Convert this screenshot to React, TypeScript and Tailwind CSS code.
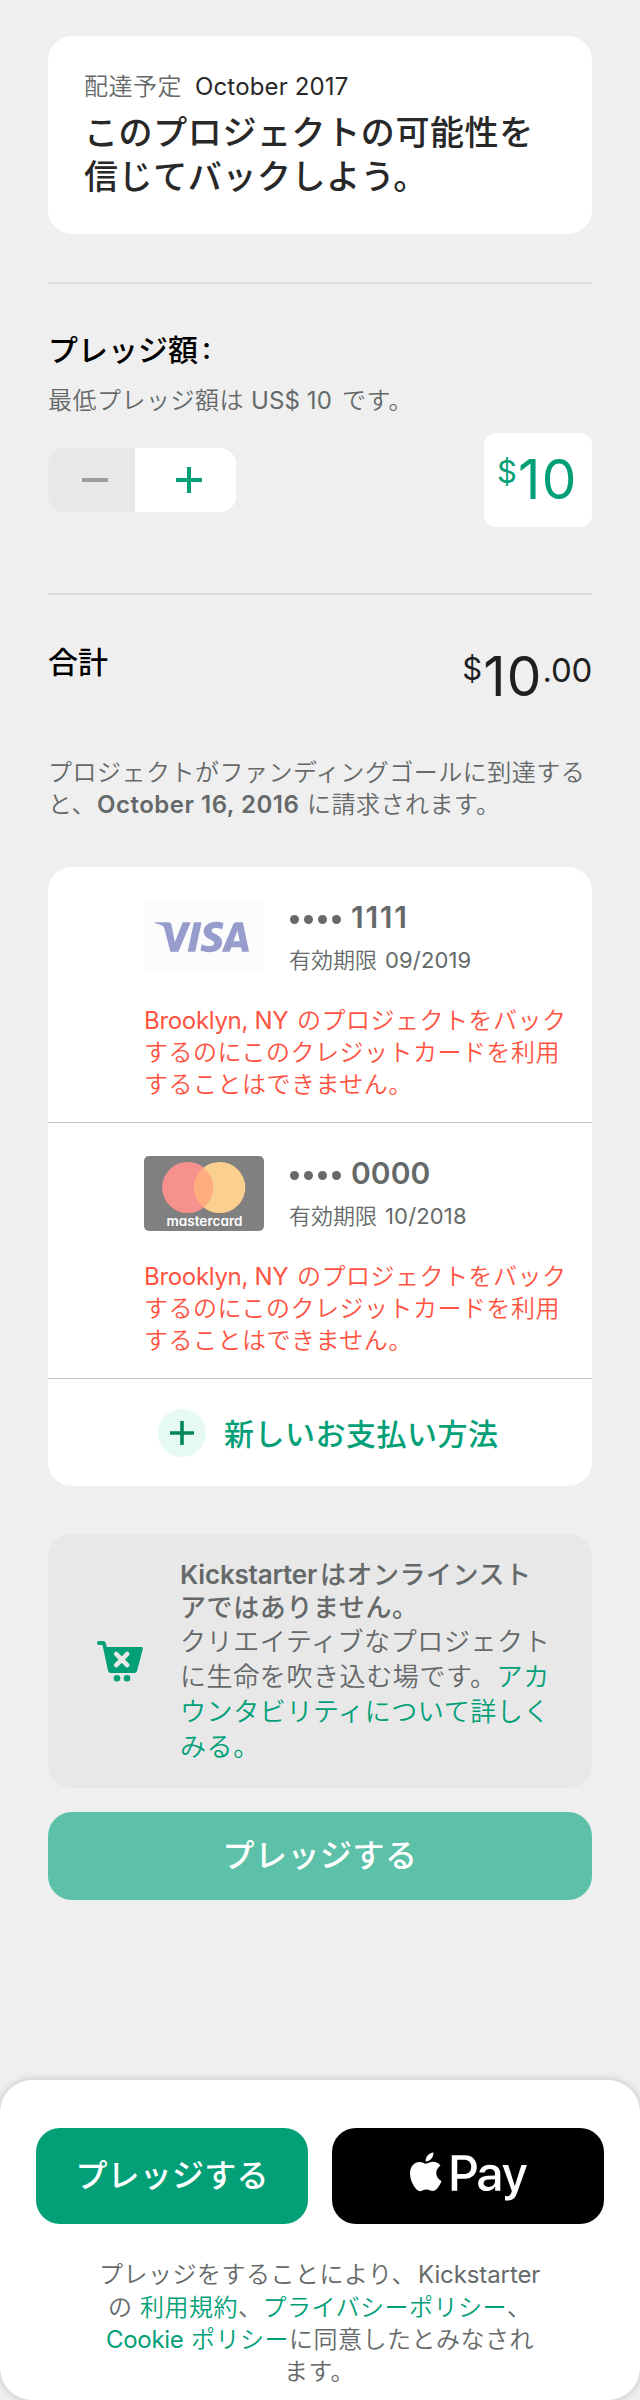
import React from "react";
import { FaApplePay } from "react-icons/fa";
import { SiVisa } from "react-icons/si";

function Row({ className = "", children }: { className?: string; children: React.ReactNode }) {
  return <div className={"flex items-center whitespace-pre " + className}>{children}</div>;
}

function MastercardLogo() {
  return (
    <svg width="120" height="75" viewBox="0 0 120 75" className="block">
      <rect width="120" height="75" rx="5" fill="#808080" />
      <circle cx="43.7" cy="31.5" r="25.6" fill="#f6918d" />
      <circle cx="75.7" cy="31.5" r="25.6" fill="#fbd08f" />
      <clipPath id="overlap">
        <circle cx="43.7" cy="31.5" r="25.6" />
      </clipPath>
      <circle cx="75.7" cy="31.5" r="25.6" fill="#ffac7e" clipPath="url(#overlap)" />
      <text
        x="22.5"
        y="69.5"
        textLength="76"
        lengthAdjust="spacingAndGlyphs"
        fill="#fff"
        className="text-[13px] font-semibold [font-feature-settings:'cv11']"
      >
        mastercard
      </text>
    </svg>
  );
}

function VisaLogo() {
  return (
    <div className="flex h-[74px] w-[120px] items-center justify-center rounded-[5px] bg-[#fcfcfc] text-[#969ccc]">
      <SiVisa size={94} className="-ml-[5px]" />
    </div>
  );
}

function PaymentMethod({ logo, last4, expiry }: { logo: React.ReactNode; last4: React.ReactNode; expiry: string }) {
  return (
    <div className="h-64 border-b border-[#c4c4c4] pl-24 pt-[33px]">
      <div className="flex h-[75px]">
        {logo}
        <div className="pl-[25px] text-[#656969]">
          <Row className="h-[34px] text-[30px] font-semibold">
            <span className="mr-2.5 flex gap-[4.5px] pl-px pt-[5px]">
              {[0, 1, 2, 3].map((i) => (
                <span key={i} className="size-[9.4px] rounded-full bg-[#656969]" />
              ))}
            </span>
            {last4}
          </Row>
          <Row className="mt-2.5 h-8 text-[22px]">
            有効期限<span className="ml-2 font-normal tracking-[0.15px]">{expiry}</span>
          </Row>
        </div>
      </div>
      <div className="mt-[30px] text-[24px] tracking-[0.5px] text-[#ff5342]">
        <Row className="h-8">
          <span className="w-[153px] font-normal tracking-[-0.3px]">Brooklyn, NY</span>のプロジェクトをバック
        </Row>
        <Row className="h-8">するのにこのクレジットカードを利用</Row>
        <Row className="h-8">することはできません。</Row>
      </div>
    </div>
  );
}

function CartIcon() {
  return (
    <svg width="46" height="41" viewBox="0 0 46 41" className="block">
      <path
        d="M2 0H6.5Q8.2 0 8.7 1.8L9.7 6H44Q46.2 6 45.8 8L40 30Q39.4 32 37.5 32H13.5Q11.6 32 11.1 30L5.5 4H2Q0 4 0 2Q0 0 2 0Z"
        fill="#03a078"
      />
      <path d="M19.2 13L30.2 24.2M30.2 13L19.2 24.2" stroke="#e8e8e8" strokeWidth="4.6" strokeLinecap="round" />
      <circle cx="20" cy="37.3" r="3.3" fill="#03a078" />
      <circle cx="30" cy="37.3" r="3.3" fill="#03a078" />
    </svg>
  );
}

export default function App() {
  return (
    <div
      lang="ja"
      className="flex h-[2400px] w-[640px] flex-col bg-[#efefef] font-['Inter','Noto_Sans_CJK_JP',sans-serif] text-[24px] font-[350] text-[#656969]"
    >
      <main className="flex flex-col px-12 pt-9">
        <section className="h-[198px] rounded-3xl bg-white pl-9 pt-[35px] text-[#282828]">
          <Row className="h-8 tracking-[0.5px]">
            <span className="w-[111px] text-[#656969]">配達予定</span>
            <span className="font-normal tracking-[0.15px]">October 2017</span>
          </Row>
          <h1 className="mt-[7px] text-[34px] font-medium tracking-[0.6px]">
            <Row className="h-11">このプロジェクトの可能性を</Row>
            <Row className="h-11">信じてバックしよう。</Row>
          </h1>
        </section>

        <hr className="mt-12 h-0.5 border-0 bg-[#dcdcdc]" />

        <section className="pt-[50px]">
          <Row className="h-8 text-[30px] font-medium text-black">
            プレッジ額<span className="-mt-1 ml-1">:</span>
          </Row>
          <Row className="mt-[19px] h-8 tracking-[0.5px] text-[#656969]">
            <span className="w-[203px]">最低プレッジ額は</span>
            <span className="w-[91px] font-normal tracking-[0.1px]">US$ 10</span>です。
          </Row>
          <div className="mt-4 flex items-center justify-between">
            <div className="flex h-16 w-[188px] overflow-hidden rounded-2xl">
              <button className="flex w-[87px] items-center bg-[#e8e8e8] pl-[34px]">
                <span className="h-1 w-[26px] bg-[#9b9e9e]" />
              </button>
              <button className="flex flex-1 items-center bg-white pl-[41px]">
                <svg width="26" height="26" className="block">
                  <path d="M13 0V26M0 13H26" stroke="#03a078" strokeWidth="4" />
                </svg>
              </button>
            </div>
            <Row className="h-[94px] w-[108px] items-start rounded-xl bg-white pl-[13px] font-normal text-[#03a078]">
              <span className="w-[21px] pt-[25px] text-[31px] leading-[28px]">$</span>
              <span className="mt-[17px] text-[55px] leading-[58px] tracking-[1.5px]">10</span>
            </Row>
          </div>
        </section>

        <hr className="mt-[66px] h-0.5 border-0 bg-[#dcdcdc]" />

        <section className="flex h-[161px] justify-between pt-[51px]">
          <Row className="h-8 text-[30px] font-medium text-black">合計</Row>
          <Row className="h-16 items-start font-normal text-[#1f1f1f]">
            <span className="w-[21px] pt-[9px] text-[31px] leading-[28px]">$</span>
            <span className="text-[55px] leading-[60px] tracking-[1.2px]">10</span>
            <span className="mt-[9px] text-[33px] leading-[30px] tracking-[-0.3px]">.00</span>
          </Row>
        </section>

        <section className="pt-px tracking-[0.5px]">
          <Row className="h-8">プロジェクトがファンディングゴールに到達する</Row>
          <Row className="h-8">
            <span className="w-[49px]">と、</span>
            <span className="w-[210px] font-semibold tracking-[0.5px]">October 16, 2016</span>に請求されます。
          </Row>
        </section>

        <section className="mt-[46px] h-[619px] rounded-3xl bg-white">
          <PaymentMethod logo={<VisaLogo />} last4={<span className="tracking-[1.7px]">1111</span>} expiry="09/2019" />
          <PaymentMethod logo={<MastercardLogo />} last4="0000" expiry="10/2018" />
          <Row className="h-[107px] pl-[110px] text-[30px] font-medium tracking-[0.5px] text-[#03a078]">
            <span className="mr-[18px] flex size-12 items-center justify-center rounded-full bg-[#e6faf1]">
              <svg width="24" height="24" className="block">
                <path d="M12 0V24M0 12H24" stroke="#028858" strokeWidth="3.6" />
              </svg>
            </span>
            <span className="pt-[3px]">新しいお支払い方法</span>
          </Row>
        </section>

        <section className="mt-12 flex h-[254px] rounded-3xl bg-[#e8e8e8] pl-[49px] pt-6 text-[26px] tracking-[0.6px]">
          <div className="w-[83px] pt-[83px]">
            <CartIcon />
          </div>
          <div>
            <Row className="h-[33px] font-medium tracking-[0.5px]">
              <span className="w-[140px] font-semibold tracking-[-0.2px]">Kickstarter</span>はオンラインスト
            </Row>
            <Row className="h-[33px] font-medium">アではありません。</Row>
            <Row className="h-[35px]">クリエイティブなプロジェクト</Row>
            <Row className="h-[35px]">
              に生命を吹き込む場です。<span className="text-[#03a078]">アカ</span>
            </Row>
            <Row className="h-[35px] text-[#03a078]">ウンタビリティについて詳しく</Row>
            <Row className="h-[35px] text-[#03a078]">みる。</Row>
          </div>
        </section>

        <button className="mt-6 h-[88px] rounded-3xl bg-[#5dc1a9] pb-px text-[32px] font-medium tracking-[0.5px] text-white">
          プレッジする
        </button>
      </main>

      <footer className="mt-auto h-80 rounded-[32px] bg-white px-9 pt-12 shadow-[0_0_8px_rgba(0,0,0,0.2)]">
        <div className="flex gap-6">
          <button className="h-24 flex-1 rounded-3xl bg-[#03a078] pb-px text-[32px] font-medium tracking-[0.2px] text-white">
            プレッジする
          </button>
          <button className="flex h-24 flex-1 items-center justify-center rounded-3xl bg-black text-white">
            <FaApplePay size={117} />
          </button>
        </div>
        <div className="pt-[35px] tracking-[0.5px]">
          <Row className="h-[32.4px] pl-[63px]">
            <span className="w-[319px]">プレッジをすることにより、</span>
            <span className="font-normal tracking-[-0.1px]">Kickstarter</span>
          </Row>
          <Row className="h-[32.4px] pl-[72px]">
            <span className="w-8">の</span>
            <span className="text-[#03a078]">利用規約</span>、<span className="text-[#03a078]">プライバシーポリシー</span>、
          </Row>
          <Row className="h-[32.4px] pl-[70px]">
            <span className="w-[85px] font-normal tracking-[-0.3px] text-[#03a078]">Cookie</span>
            <span className="text-[#03a078]">ポリシー</span>に同意したとみなされ
          </Row>
          <Row className="h-[32.4px] pl-[248px]">ます。</Row>
        </div>
      </footer>
    </div>
  );
}
